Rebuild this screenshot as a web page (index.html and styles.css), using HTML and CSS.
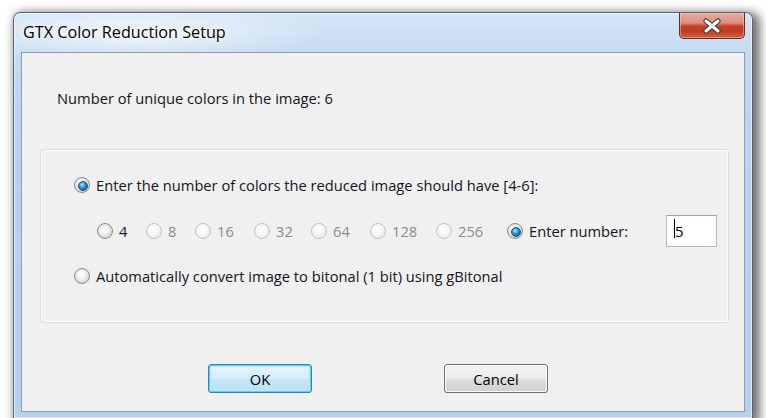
FILE: index.html
```html
<!DOCTYPE html>
<html lang="en">
<head>
<meta charset="utf-8">
<title>GTX Color Reduction Setup</title>
<link rel="stylesheet" href="styles.css">
</head>
<body>
<div class="window">
  <div class="titlebar">
    <span class="title">GTX Color Reduction Setup</span>
    <button class="close" aria-label="Close">
      <svg width="20" height="16" viewBox="0 0 20 16">
        <path d="M4 3 L16 13 M16 3 L4 13" stroke="#3e3e3e" stroke-width="5.2" stroke-linecap="round"/>
        <path d="M4 3 L16 13 M16 3 L4 13" stroke="#ffffff" stroke-width="3" stroke-linecap="round"/>
      </svg>
    </button>
  </div>
  <div class="client">
    <p class="info">Number of unique colors in the image: 6</p>
    <div class="group">
      <label class="opt"><span class="radio checked"></span>Enter the number of colors the reduced image should have [4-6]:</label>
      <div class="choices">
        <label class="opt"><span class="radio"></span>4</label>
        <label class="opt disabled"><span class="radio"></span>8</label>
        <label class="opt disabled"><span class="radio"></span>16</label>
        <label class="opt disabled"><span class="radio"></span>32</label>
        <label class="opt disabled"><span class="radio"></span>64</label>
        <label class="opt disabled"><span class="radio"></span>128</label>
        <label class="opt disabled"><span class="radio"></span>256</label>
        <label class="opt"><span class="radio checked"></span>Enter number:</label>
        <div class="numbox"><span class="caret"></span>5</div>
      </div>
      <label class="opt last"><span class="radio"></span>Automatically convert image to bitonal (1 bit) using gBitonal</label>
    </div>
    <div class="buttons">
      <button class="btn default">OK</button>
      <button class="btn">Cancel</button>
    </div>
  </div>
</div>
</body>
</html>
```
FILE: styles.css
```css
html, body {
  margin: 0;
  padding: 0;
  background: #ffffff;
  overflow: hidden;
}

body {
  width: 766px;
  height: 418px;
  font-family: "Open Sans", "Noto Sans", sans-serif;
  font-size: 14.7px;
  color: #141420;
}

/* Aero frame */
.window {
  box-sizing: border-box;
  margin: 12px 0 0 13px;
  width: 740px;
  height: 406px;
  padding: 0 7px 4px 7px;
  border: 1px solid #56667a;
  border-bottom: none;
  border-radius: 7px 7px 0 0;
  background:
    radial-gradient(ellipse 190px 30px at 120px 20px, rgba(255,255,255,0.7), rgba(255,255,255,0) 100%),
    linear-gradient(180deg, #d6e6f6 0, #c6dbf1 38px, #b9d2ee 120px, #b6d0ed 100%);
  box-shadow: inset 0 0 0 1px rgba(255,255,255,0.55), 4px 3px 10px 3px rgba(0,0,0,0.55);
}

.titlebar {
  height: 39px;
  display: flex;
  align-items: flex-start;
  justify-content: space-between;
}

.title {
  margin: 9px 0 0 2px;
  font-size: 16.2px;
  line-height: 20px;
  color: #000;
  text-shadow: 0 0 8px #fff, 0 0 4px #fff;
}

.close {
  box-sizing: border-box;
  width: 66px;
  height: 26px;
  padding: 0;
  margin: 0;
  border: 1px solid #6b2a20;
  border-top: none;
  border-radius: 0 0 5px 5px;
  background: linear-gradient(180deg, #e7ada0 0, #dc8f7d 40%, #c7432b 52%, #c13a22 72%, #d5613f 100%);
  box-shadow: inset 0 0 0 1px rgba(255,215,200,0.45);
  display: flex;
  align-items: center;
  justify-content: center;
}

.close svg { display: block; margin-top: 1px; }

/* Dialog body */
.client {
  box-sizing: border-box;
  height: 360px;
  border: 1px solid #8e9cab;
  background: #f0f0f0;
  overflow: hidden;
}

.info {
  margin: 35px 0 0 35px;
  line-height: 20px;
}

.group {
  margin: 41px 15px 0 18px;
  padding: 25px 0 36px 33px;
  border: 1px solid #d5dfe5;
  border-radius: 3px;
  box-shadow: inset 0 0 0 1px #fbfbfb;
}

.opt {
  display: flex;
  align-items: center;
  line-height: 20px;
  height: 20px;
  white-space: nowrap;
}

.opt.disabled { color: #8b8b8b; }

.opt.last { margin-top: 19px; }

.choices {
  margin: 20px 0 0 23px;
  height: 32px;
  display: grid;
  grid-template-columns: 49px 49px 59px 57px 59px 66px 71px 159px 51px;
  align-items: center;
}

/* Radio glyphs */
.radio {
  box-sizing: border-box;
  position: relative;
  flex: none;
  width: 16px;
  height: 16px;
  margin-right: 6px;
  border-radius: 50%;
  border: 1px solid #8a8b8c;
  background: radial-gradient(circle at 45% 40%, #ffffff 0, #f1f1f1 35%, #d3d3d3 75%, #ececec 100%);
}

.disabled .radio {
  border-color: #c3c3c3;
  background: radial-gradient(circle at 45% 40%, #ffffff 0, #f7f7f7 40%, #e6e6e6 80%, #f3f3f3 100%);
}

.radio.checked::after {
  content: "";
  position: absolute;
  left: 3px;
  top: 3px;
  width: 8px;
  height: 8px;
  border-radius: 50%;
  border: 0.5px solid #1d4f7c;
  background: radial-gradient(circle at 40% 35%, #b9ecff 0, #3aa2de 35%, #136bb0 70%, #0b3f72 100%);
}

/* Number field */
.numbox {
  box-sizing: border-box;
  position: relative;
  width: 51px;
  height: 32px;
  border: 1px solid #a9bdd2;
  border-top-color: #8ea6bf;
  background: #fff;
  padding-left: 8px;
  font-size: 15px;
  line-height: 30px;
  color: #000;
}

.caret {
  position: absolute;
  left: 7px;
  top: 3px;
  width: 1px;
  height: 19px;
  background: #000;
}

/* Command buttons */
.buttons {
  display: flex;
  gap: 132px;
  margin: 41px 0 0 186px;
}

.btn {
  box-sizing: border-box;
  width: 104px;
  height: 29px;
  padding: 0;
  border: 1px solid #707070;
  border-radius: 3px;
  background: linear-gradient(180deg, #f3f3f3 0, #ebebeb 48%, #dedede 52%, #d0d0d0 100%);
  box-shadow: inset 0 0 0 1px #fbfbfb;
  font-family: "Open Sans", "Noto Sans", sans-serif;
  font-size: 14.7px;
  color: #000;
}

.btn.default {
  border-color: #3c7fb1;
  background: linear-gradient(180deg, #e6f4fc 0, #d6edfa 48%, #c6e5f7 52%, #bfe1f4 100%);
  box-shadow: inset 0 0 0 1px #56d4f8, inset 0 0 0 2px #b6e6fa;
}
```
